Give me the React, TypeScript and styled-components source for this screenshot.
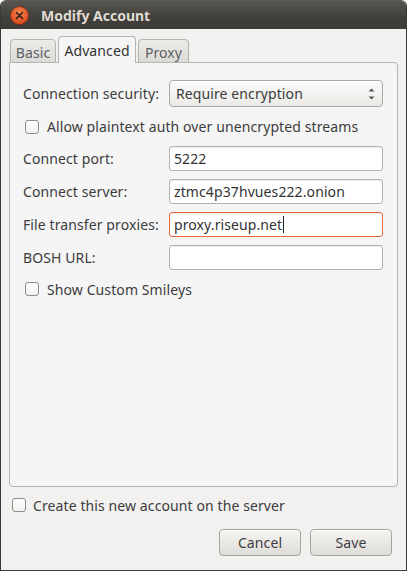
import React from "react";
import styled, { createGlobalStyle } from "styled-components";

const Global = createGlobalStyle`
  html, body { margin: 0; padding: 0; background: #ffffff; }
  * { box-sizing: border-box; }
`;

const Window = styled.div`
  width: 407px;
  height: 571px;
  display: flex;
  flex-direction: column;
  background: #f2f1f0;
  border: 1px solid #3a3935;
  border-top-color: #5e5c56;
  border-radius: 6px 6px 0 0;
  overflow: hidden;
  font-family: "Noto Sans", "Open Sans", sans-serif;
  font-size: 14px;
  letter-spacing: 0.1px;
  color: #3c3c3c;
`;

const TitleBar = styled.div`
  height: 28px;
  flex: none;
  display: flex;
  align-items: center;
  gap: 12px;
  padding-left: 9px;
  background: linear-gradient(#57554f, #403f3a 60%, #3c3b37);
`;

const Title = styled.div`
  font-weight: bold;
  font-size: 14px;
  letter-spacing: 0;
  color: #dfdbd2;
  line-height: 1;
  margin-top: 1px;
`;

const Body = styled.div`
  flex: 1;
  display: flex;
  flex-direction: column;
  padding: 7px 8px 13px 8px;
`;

const TabRow = styled.div`
  display: flex;
  align-items: flex-end;
  gap: 2px;
  padding-left: 1px;
  height: 27px;
`;

const Tab = styled.div<{ $active?: boolean; $w: number }>`
  position: relative;
  z-index: ${(p) => (p.$active ? 2 : 0)};
  width: ${(p) => p.$w}px;
  height: ${(p) => (p.$active ? 27 : 24)}px;
  display: flex;
  align-items: center;
  justify-content: center;
  padding-top: ${(p) => (p.$active ? 0 : 2)}px;
  border: 1px solid #b6b4af;
  border-bottom: ${(p) => (p.$active ? "none" : "1px solid #b6b4af")};
  border-radius: 4px 4px 0 0;
  background: ${(p) =>
    p.$active ? "#f5f5f5" : "linear-gradient(#ecebe8, #dcdad6)"};
  color: ${(p) => (p.$active ? "#333333" : "#5b5f66")};
  font-size: 14px;
`;

const Panel = styled.div`
  position: relative;
  z-index: 1;
  margin-top: -1px;
  height: 425px;
  background: #f5f5f5;
  border: 1px solid #b6b4af;
  border-radius: 0 4px 4px 4px;
  padding: 17px 13px 0 13px;
  display: flex;
  flex-direction: column;
  gap: 8px;
`;

const FieldRow = styled.div<{ $h: number }>`
  display: grid;
  grid-template-columns: 146px 214px;
  align-items: center;
  height: ${(p) => p.$h}px;
`;

const Label = styled.div`
  white-space: nowrap;
`;

const Combo = styled.div`
  height: 27px;
  border: 1px solid #aba9a4;
  border-radius: 4px;
  background: linear-gradient(#fbfbfa, #ebeae7);
  box-shadow: inset 0 1px 0 #ffffff;
  display: flex;
  align-items: center;
  justify-content: space-between;
  padding: 0 7px 0 6px;
`;

const Entry = styled.div<{ $focus?: boolean }>`
  height: 25px;
  border: 1px solid ${(p) => (p.$focus ? "#e8673a" : "#b3b1ac")};
  border-radius: 3px;
  background: #ffffff;
  box-shadow: inset 0 1px 1px rgba(0, 0, 0, 0.08);
  display: flex;
  align-items: center;
  padding-left: 4px;
  white-space: nowrap;
  color: #333333;
`;

const Caret = styled.span`
  display: inline-block;
  width: 1px;
  height: 17px;
  background: #222;
  margin-left: 1px;
`;

const CheckRow = styled.label<{ $h: number; $indent: number; $gap?: number; $top?: number }>`
  display: flex;
  align-items: center;
  gap: ${(p) => p.$gap ?? 8}px;
  height: ${(p) => p.$h}px;
  margin-top: ${(p) => p.$top ?? 0}px;
  padding-left: ${(p) => p.$indent}px;
  white-space: nowrap;
`;

const Box = styled.span`
  width: 14px;
  height: 14px;
  flex: none;
  border: 1px solid #8e8c87;
  border-radius: 3px;
  background: linear-gradient(#ffffff, #f1f0ee);
`;

const Footer = styled.div`
  display: flex;
  flex-direction: column;
`;

const ButtonRow = styled.div`
  display: flex;
  justify-content: flex-end;
  gap: 9px;
  margin-top: 17px;
  padding-right: 6px;
`;

const Button = styled.button`
  width: 82px;
  height: 27px;
  border: 1px solid #a6a49f;
  border-radius: 4px;
  background: linear-gradient(#f6f5f3, #dedcd8);
  box-shadow: inset 0 1px 0 #ffffff;
  font-family: "Noto Sans", "Open Sans", sans-serif;
  font-size: 14px;
  letter-spacing: 0.1px;
  color: #3c3c3c;
  padding: 0;
`;

const CloseIcon = () => (
  <svg width="19" height="19" viewBox="0 0 19 19">
    <defs>
      <radialGradient id="cg" cx="50%" cy="35%" r="65%">
        <stop offset="0%" stopColor="#f6844f" />
        <stop offset="100%" stopColor="#d9461a" />
      </radialGradient>
    </defs>
    <circle cx="9.5" cy="9.5" r="9" fill="url(#cg)" stroke="#8a2f10" strokeWidth="0.8" />
    <path d="M6.6 6.6 L12.4 12.4 M12.4 6.6 L6.6 12.4" stroke="#3a2419" strokeWidth="1.6" strokeLinecap="round" />
  </svg>
);

const Spinner = () => (
  <svg width="7" height="14" viewBox="0 0 7 14">
    <path d="M0.5 4.5 L3.5 1.5 L6.5 4.5 Z" fill="#555" />
    <path d="M0.5 9.5 L3.5 12.5 L6.5 9.5 Z" fill="#555" />
  </svg>
);

export default function App() {
  return (
    <>
      <Global />
      <Window>
        <TitleBar>
          <CloseIcon />
          <Title>Modify Account</Title>
        </TitleBar>
        <Body>
          <TabRow>
            <Tab $w={46}>Basic</Tab>
            <Tab $w={78} $active>Advanced</Tab>
            <Tab $w={51}>Proxy</Tab>
          </TabRow>
          <Panel>
            <FieldRow $h={27}>
              <Label>Connection security:</Label>
              <Combo>
                <span>Require encryption</span>
                <Spinner />
              </Combo>
            </FieldRow>
            <CheckRow $h={23} $indent={2}>
              <Box />
              Allow plaintext auth over unencrypted streams
            </CheckRow>
            <FieldRow $h={25}>
              <Label>Connect port:</Label>
              <Entry>5222</Entry>
            </FieldRow>
            <FieldRow $h={25}>
              <Label>Connect server:</Label>
              <Entry>ztmc4p37hvues222.onion</Entry>
            </FieldRow>
            <FieldRow $h={25}>
              <Label>File transfer proxies:</Label>
              <Entry $focus>
                proxy.riseup.net
                <Caret />
              </Entry>
            </FieldRow>
            <FieldRow $h={25}>
              <Label>BOSH URL:</Label>
              <Entry />
            </FieldRow>
            <CheckRow $h={22} $indent={2}>
              <Box />
              Show Custom Smileys
            </CheckRow>
          </Panel>
          <Footer>
            <CheckRow $h={14} $indent={3} $gap={7} $top={11}>
              <Box />
              Create this new account on the server
            </CheckRow>
            <ButtonRow>
              <Button>Cancel</Button>
              <Button>Save</Button>
            </ButtonRow>
          </Footer>
        </Body>
      </Window>
    </>
  );
}
